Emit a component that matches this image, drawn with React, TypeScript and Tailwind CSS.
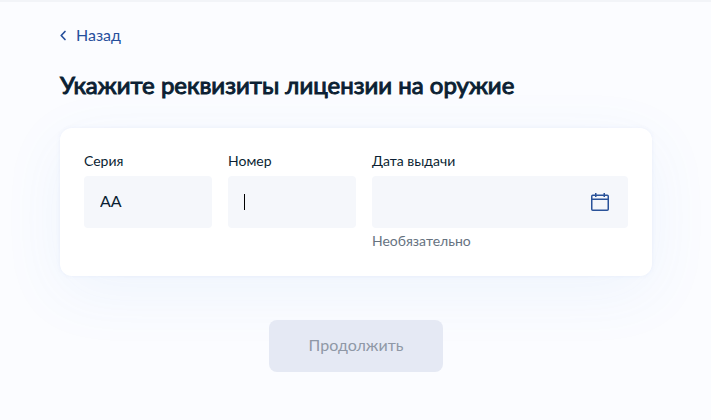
import { useId, useState, type ReactNode } from "react";

function ChevronLeft() {
  return (
    <svg className="h-3 w-2" viewBox="0 0 8 12" fill="none" stroke="currentColor" strokeWidth="1.7" aria-hidden="true">
      <path d="M5 2.5 1.2 6.5 5 10.5" strokeLinecap="round" strokeLinejoin="round" />
    </svg>
  );
}

function CalendarIcon() {
  return (
    <svg className="size-6" viewBox="0 0 24 24" fill="none" stroke="currentColor" strokeWidth="1.5" aria-hidden="true">
      <rect x="3.75" y="5.25" width="16.5" height="15" rx="1" />
      <path d="M3.75 9.25h16.5" />
      <path d="M7.75 3v4M16.25 3v4" />
    </svg>
  );
}

type FieldProps = {
  label: string;
  hint?: string;
  initial?: string;
  active?: boolean;
  action?: ReactNode;
};

function Field({ label, hint, initial = "", active, action }: FieldProps) {
  const id = useId();
  const [value, setValue] = useState(initial);
  return (
    <div className="min-w-0">
      <label htmlFor={id} className="block pb-0.5 text-sm leading-[18px] text-[#0b1f33]">
        {label}
      </label>
      <div className="relative mt-1">
        <input
          id={id}
          type="text"
          value={value}
          onChange={(e) => setValue(e.target.value)}
          className="block h-13 w-full rounded bg-[#f5f7fb] px-4 pb-1 text-base text-[#0b1f33] caret-transparent outline-none"
        />
        {active && value === "" && (
          <span className="pointer-events-none absolute top-4.5 left-4 h-4 w-px bg-black" />
        )}
        {action}
      </div>
      {hint && <p className="mt-1 pb-0.5 text-sm leading-[18px] text-[#66727f]">{hint}</p>}
    </div>
  );
}

export default function App() {
  return (
    <div className="min-h-screen border-t-2 border-[#f2f4f8] bg-[#fbfcff] font-['Lato','Open_Sans',sans-serif] text-[#0b1f33]">
      <main className="pt-5 pr-[59px] pb-11 pl-15">
        <a href="#back" className="flex h-6.5 w-fit items-center gap-2 text-base text-[#264f9c]">
          <ChevronLeft />
          Назад
        </a>

        <h1 className="mt-5 pb-0.5 text-2xl leading-[34px] font-normal [-webkit-text-stroke:1px]">
          Укажите реквизиты лицензии на оружие
        </h1>

        <form>
          <section className="mt-6 grid grid-cols-[1fr_1fr_2fr] gap-4 rounded-xl bg-white p-6 shadow-[0_0_4px_rgba(76,120,200,0.08),0_16px_64px_rgba(76,140,230,0.07)]">
            <Field label="Серия" initial="АА" />
            <Field label="Номер" active />
            <Field
              label="Дата выдачи"
              hint="Необязательно"
              action={
                <button type="button" aria-label="Открыть календарь" className="absolute top-3.5 right-4 text-[#2a5299]">
                  <CalendarIcon />
                </button>
              }
            />
          </section>

          <div className="mt-11 flex justify-center">
            <button type="submit" disabled className="h-13 rounded-lg bg-[#e5e9f4] px-10 pb-0.5 text-base text-[#8f98a6]">
              Продолжить
            </button>
          </div>
        </form>
      </main>
    </div>
  );
}
